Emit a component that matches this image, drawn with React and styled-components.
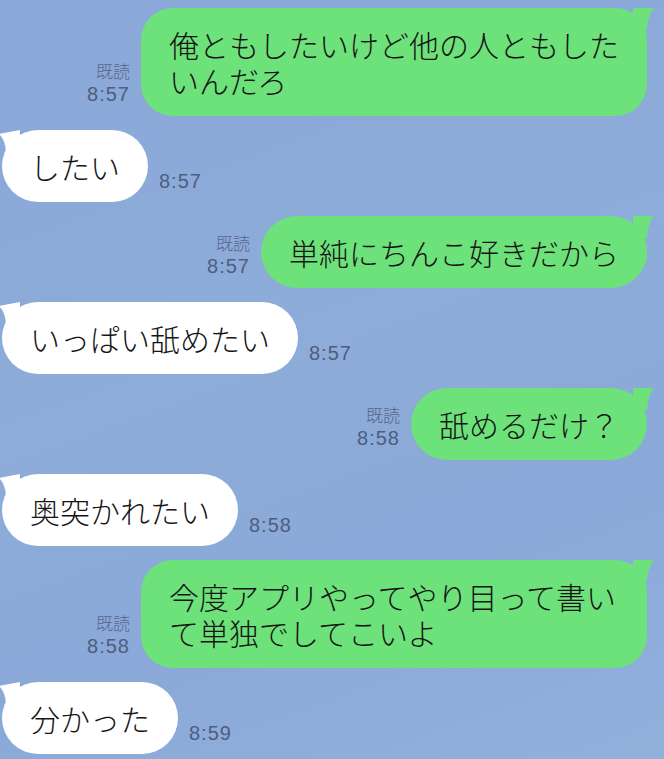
import React from 'react'
import styled, { createGlobalStyle } from 'styled-components'

const GlobalStyle = createGlobalStyle`
    html, body {
        margin: 0;
        padding: 0;
        background-color: #8aa9d8;
    }
    body {
        font-family: "Noto Sans CJK JP", "Noto Sans", sans-serif;
    }
`

const Chat = styled.div`
    width: 664px;
    height: 759px;
    overflow: hidden;
    box-sizing: border-box;
    padding: 8px 0 0 0;
    display: flex;
    flex-direction: column;
    gap: 14px;
    background: linear-gradient(160deg, #8aa8d8 0%, #8eacd9 45%, #8aa9d8 70%, #91b0dc 100%);
`

const Row = styled.div`
    display: flex;
    align-items: flex-end;
    justify-content: ${({ $mine }) => ($mine ? 'flex-end' : 'flex-start')};
    gap: ${({ $mine }) => ($mine ? '11px' : '11px')};
    padding: ${({ $mine }) => ($mine ? '0 17px 0 0' : '0 0 0 2px')};
`

const Bubble = styled.div`
    position: relative;
    box-sizing: border-box;
    max-width: 506px;
    padding: 18px 28px;
    font-size: 30px;
    font-weight: 300;
    line-height: 36px;
    color: #151515;
    background-color: ${({ $mine }) => ($mine ? '#6de27b' : '#ffffff')};
    border-radius: ${({ $multi }) => ($multi ? '32px' : '36px')};
`

const Tail = styled.svg`
    position: absolute;
    top: 0;
    ${({ $mine }) => ($mine ? 'right: -8px;' : 'left: -4px;')}
    width: 22px;
    height: 22px;
`

const Meta = styled.div`
    display: flex;
    flex-direction: column;
    align-items: ${({ $mine }) => ($mine ? 'flex-end' : 'flex-start')};
    margin-bottom: ${({ $mine }) => ($mine ? '10px' : '9px')};
    color: #4e5e7d;
`

const Read = styled.span`
    font-size: 17px;
    font-weight: 300;
    line-height: 22px;
    color: #56668a;
`

const Time = styled.span`
    font-family: "Liberation Sans", "Noto Sans", sans-serif;
    font-size: 20px;
    line-height: 24px;
    letter-spacing: 1px;
`

const messages = [
    { mine: true, text: '俺ともしたいけど他の人ともしたいんだろ', time: '8:57' },
    { mine: false, text: 'したい', time: '8:57' },
    { mine: true, text: '単純にちんこ好きだから', time: '8:57' },
    { mine: false, text: 'いっぱい舐めたい', time: '8:57' },
    { mine: true, text: '舐めるだけ？', time: '8:58' },
    { mine: false, text: '奥突かれたい', time: '8:58' },
    { mine: true, text: '今度アプリやってやり目って書いて単独でしてこいよ', time: '8:58' },
    { mine: false, text: '分かった', time: '8:59' },
]

const BubbleTail = ({ mine }) => (
    <Tail $mine={mine} viewBox="0 0 22 22">
        {mine ? (
            <path d="M0 0 L21 0 Q15 6 14 22 L0 22 Z" fill="#6de27b" />
        ) : (
            <path d="M22 0 L1 4 Q7 9 8 22 L22 22 Z" fill="#ffffff" />
        )}
    </Tail>
)

const Message = ({ mine, text, time }) => {
    const bubble = (
        <Bubble $mine={mine} $multi={text.length > 15}>
            <BubbleTail mine={mine} />
            {text}
        </Bubble>
    )
    return (
        <Row $mine={mine}>
            {mine ? (
                <>
                    <Meta $mine>
                        <Read>既読</Read>
                        <Time>{time}</Time>
                    </Meta>
                    {bubble}
                </>
            ) : (
                <>
                    {bubble}
                    <Meta>
                        <Time>{time}</Time>
                    </Meta>
                </>
            )}
        </Row>
    )
}

const App = () => {
    return (
        <>
            <GlobalStyle />
            <Chat>
                {messages.map((m, i) => (
                    <Message key={i} {...m} />
                ))}
            </Chat>
        </>
    )
}

export default App
